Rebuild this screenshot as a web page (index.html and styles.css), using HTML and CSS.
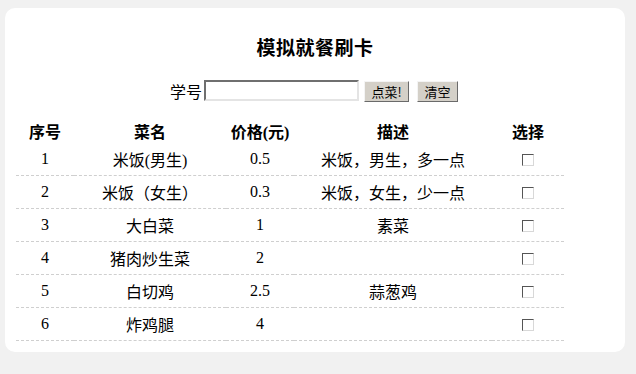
FILE: index.html
```html
<!DOCTYPE html>
<html lang="zh-CN">
<head>
  <meta charset="UTF-8">
  <title>模拟就餐刷卡</title>
  <link rel="stylesheet" href="styles.css">
</head>
<body>
  <div class="card">
    <h2 class="title">模拟就餐刷卡</h2>

    <div class="order-bar">
      <label for="sid">学号</label>
      <input type="text" id="sid">
      <button class="btn btn-order">点菜!</button>
      <button class="btn btn-clear">清空</button>
    </div>

    <table class="menu">
      <colgroup>
        <col class="c-no">
        <col class="c-name">
        <col class="c-price">
        <col class="c-desc">
        <col class="c-pick">
      </colgroup>
      <thead>
        <tr>
          <th>序号</th>
          <th>菜名</th>
          <th>价格(元)</th>
          <th>描述</th>
          <th>选择</th>
        </tr>
      </thead>
      <tbody>
        <tr><td>1</td><td>米饭(男生)</td><td>0.5</td><td>米饭，男生，多一点</td><td><input type="checkbox"></td></tr>
        <tr><td>2</td><td>米饭（女生）</td><td>0.3</td><td>米饭，女生，少一点</td><td><input type="checkbox"></td></tr>
        <tr><td>3</td><td>大白菜</td><td>1</td><td>素菜</td><td><input type="checkbox"></td></tr>
        <tr><td>4</td><td>猪肉炒生菜</td><td>2</td><td></td><td><input type="checkbox"></td></tr>
        <tr><td>5</td><td>白切鸡</td><td>2.5</td><td>蒜葱鸡</td><td><input type="checkbox"></td></tr>
        <tr><td>6</td><td>炸鸡腿</td><td>4</td><td></td><td><input type="checkbox"></td></tr>
      </tbody>
    </table>
  </div>
</body>
</html>
```

FILE: styles.css
```css
html, body {
  margin: 0;
  padding: 0;
}
body {
  background: #f1f1f1;
  font-family: "Liberation Serif", "Noto Sans CJK SC", serif;
  color: #000;
  padding: 8px 0 0 5px;
}
.card {
  background: #fff;
  width: 620px;
  height: 344px;
  border-radius: 10px;
  box-sizing: border-box;
  padding-top: 28px;
}
.title {
  margin: 0;
  text-align: center;
  font-family: "Noto Sans CJK SC", sans-serif;
  font-size: 19px;
  line-height: 22px;
  font-weight: bold;
  letter-spacing: 0.5px;
}
.order-bar {
  display: flex;
  justify-content: center;
  align-items: center;
  margin-top: 22px;
  height: 21px;
  padding-right: 2px;
  font-family: "Noto Sans CJK SC", sans-serif;
  font-size: 16px;
}
.order-bar label {
  margin-right: 2px;
}
.order-bar input {
  width: 155px;
  height: 21px;
  box-sizing: border-box;
  border: 2px solid;
  border-color: #6f6f6f #e4e4e4 #e4e4e4 #6f6f6f;
  padding: 0 2px;
  margin: 0;
}
.btn {
  height: 21px;
  margin: 1px 0 0 5px;
  padding: 0;
  background: #d4d0c8;
  border: 1px solid;
  border-color: #f4f4f4 #6a6a6a #6a6a6a #f4f4f4;
  font-family: "Noto Sans CJK SC", sans-serif;
  font-size: 13px;
  color: #000;
}
.btn-order { width: 45px; }
.btn-clear { width: 41px; margin-left: 8px; }

.menu {
  margin: 17px 0 0 11px;
  width: 548px;
  border-collapse: collapse;
  table-layout: fixed;
  text-align: center;
}
.c-no { width: 58px; }
.c-name { width: 152px; }
.c-price { width: 68px; }
.c-desc { width: 198px; }
.c-pick { width: 72px; }
.menu th {
  height: 25px;
  padding: 0;
  font-size: 16px;
  font-weight: bold;
}
.menu td {
  height: 32px;
  padding: 0;
  font-size: 16px;
  border-bottom: 1px dashed #cfcfcf;
}
.menu input[type="checkbox"] {
  appearance: none;
  -webkit-appearance: none;
  width: 12px;
  height: 12px;
  margin: 0;
  vertical-align: middle;
  border: 1px solid;
  border-color: #555 #d8d8d8 #d8d8d8 #555;
  background: #fff;
}
```
